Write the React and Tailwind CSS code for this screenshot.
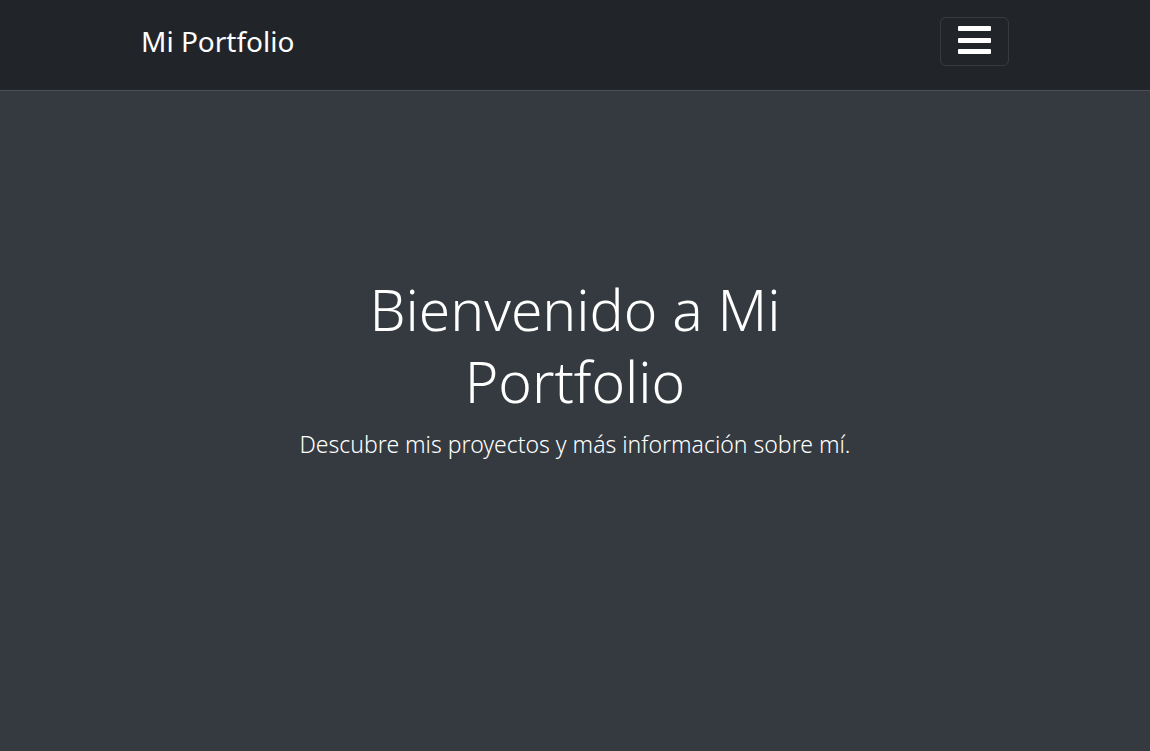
import React from 'react';

export default function App() {
  return (
    <div className="min-h-screen bg-[#343a40] text-white" style={{ fontFamily: '"Noto Sans", "Open Sans", sans-serif' }}>
      <nav className="bg-[#212529] border-b border-[#4b5057]">
        <div className="max-w-[868px] mx-auto h-[90px] flex items-center justify-between">
          <a href="#" className="text-[28px] leading-none text-white font-normal pb-[8px]">Mi Portfolio</a>
          <button className="w-[69px] h-[49px] mt-[-8px] border border-white/10 rounded-md flex flex-col items-center justify-center gap-[6.5px] pb-[2px]">
            <span className="block w-[33px] h-[5px] bg-white rounded-[1px]"></span>
            <span className="block w-[33px] h-[5px] bg-white rounded-[1px]"></span>
            <span className="block w-[33px] h-[5px] bg-white rounded-[1px]"></span>
          </button>
        </div>
      </nav>

      <main className="flex flex-col items-center text-center pt-[182px]">
        <h1 className="max-w-[460px] text-[57px] leading-[72px] font-light">Bienvenido a Mi Portfolio</h1>
        <p className="mt-[12px] text-[23px] leading-[30px] font-light">Descubre mis proyectos y más información sobre mí.</p>
      </main>
    </div>
  );
}
